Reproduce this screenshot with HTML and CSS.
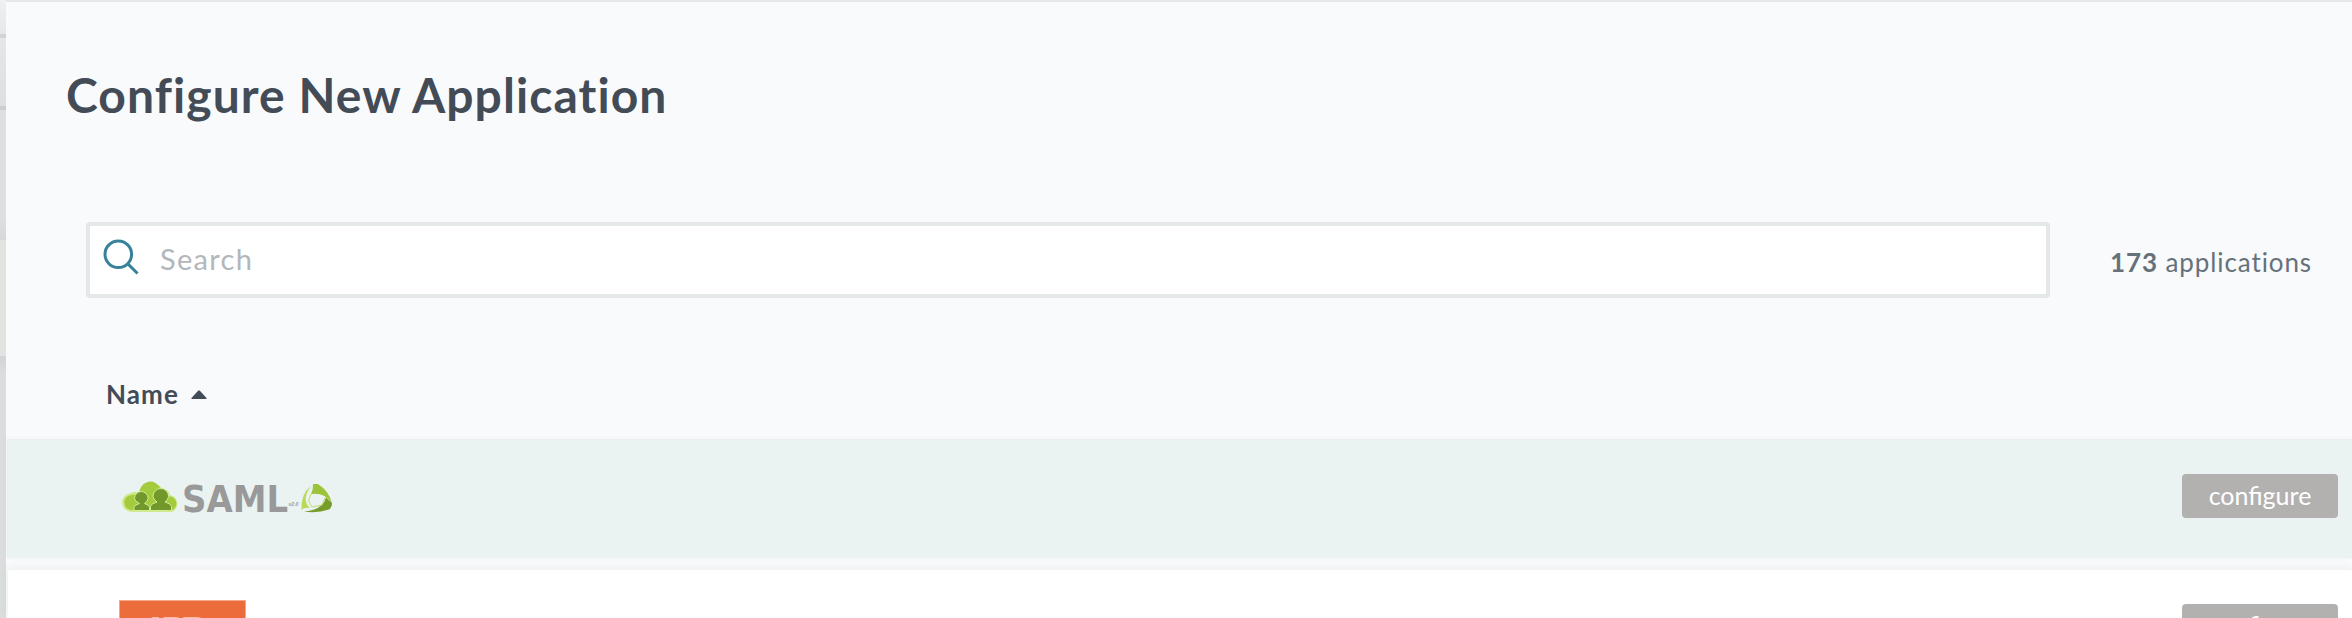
FILE: index.html
```html
<!DOCTYPE html>
<html lang="en">
<head>
<meta charset="utf-8">
<title>Configure New Application</title>
<link rel="stylesheet" href="styles.css">
</head>
<body>
<div class="page">
  <div class="backdrop">
    <div class="strip strip-head"></div>
    <div class="strip strip-row"></div>
    <div class="strip strip-gap"></div>
    <div class="strip strip-card"></div>
    <div class="strip strip-rest"></div>
  </div>
  <main class="panel">
    <h1 class="title">Configure New Application</h1>
    <div class="toolbar">
      <div class="search">
        <svg class="search-icon" width="37" height="37" viewBox="0 0 37 37"><circle cx="15.3" cy="15.3" r="13.3"/><path d="M24.6 24.6L34.6 34.5"/></svg>
        <span class="placeholder">Search</span>
      </div>
      <div class="count"><b>173</b> applications</div>
    </div>
    <div class="sort"><span>Name</span><svg width="16" height="9" viewBox="0 0 16 9"><path d="M0.5 9V8L7.3 0.6H8.7L15.5 8V9Z" fill="#434c56"/></svg></div>
    <div class="row row-active">
      <svg class="saml" width="212" height="36" viewBox="0 -2 212 36">
        <path fill="#cfea8b" d="M10 30A9.5 9.5 0 0 1 9 11Q12 9 17 10A13 13 0 0 1 40 6.5Q47 7 48 13A9 9 0 0 1 50 30Z"/>
        <path fill="#a4cb3c" d="M10 28A7.5 7.5 0 0 1 9.500 13Q13 12 18 13A10.500 10.500 0 0 1 38.500 7.500Q45 9 47 14.500A7 7 0 0 1 50 28Z"/>
        <g fill="#72982c" stroke="#d3ec98"><path d="M12 28.500V25.500Q12 23 17.500 21.500Q12.500 19 12.500 16.500A6.800 7 0 0 1 26.100 16.500Q26 19 22.500 21.500Q27.500 23 27.500 25.500V28.500Z"/><path d="M28.500 28.500V24.500Q29 21.500 35 20Q31 17 31 14.500A7.800 8 0 0 1 46.600 14.500Q46.500 17 43 20Q49 21.500 49.500 24.500V28.500Z"/></g>
        <text class="saml-text" x="60" y="29.500" textLength="106" lengthAdjust="spacingAndGlyphs">SAML</text>
        <text class="saml-version" x="166.500" y="23.500">v2.0</text>
        <path fill="#bcd95c" d="M179.500 28Q178.500 12 189 4Q179 18 188 26Q183 25 179.500 28Z"/>
        <path fill="#9cc43a" d="M191 2L196 2Q207 9 210 21Q202 10 189 12Q191.500 7 191 2Z"/>
        <path fill="#769c2c" d="M204 15.500L210 21Q210 25 207 27.500Q195 31.500 182 29.500Q201 28 204 15.500Z"/>
        <path fill="none" stroke="#c3dd6a" stroke-width="1" d="M189 12L186.500 19L190 25L200 23L203 15.500"/>
      </svg>
      <span class="button">configure</span>
    </div>
    <div class="row row-next">
      <div class="brand">ADP</div>
      <span class="button">configure</span>
    </div>
  </main>
</div>
</body>
</html>
```
FILE: styles.css
```css
* { box-sizing: border-box; }
body { margin: 0; overflow: hidden; font-family: Lato, "Open Sans", sans-serif; color: #434c56; }
.page { display: flex; width: 2352px; height: 618px; overflow: hidden; background: #e5e7e8; }
.backdrop { width: 6px; flex: none; }
.strip-head { height: 38px; background: linear-gradient(#eef0f2, #e5e7e9 34px, #cfd4d5 34px); }
.strip-row { height: 72px; background: linear-gradient(#e6e6e6, #dfdfdf 68px, #cbcecf 68px); }
.strip-gap { height: 130px; background: linear-gradient(#dee0df 110px, #d5d7d8); }
.strip-card { height: 116px; background: #e2e2e1; }
.strip-rest { height: 262px; background: linear-gradient(#d2d3d4, #dadddc 16px); }
.panel { flex: 1; height: 616px; margin-top: 2px; background: #f9fafc; }
.title { margin: 0; padding: 69px 0 0 60px; font-size: 48px; line-height: 48px; font-weight: 700; letter-spacing: 1.07px; }
.toolbar { display: flex; margin: 103px 0 0 80px; height: 76px; align-items: center; }
.search { width: 1964px; height: 76px; display: flex; align-items: flex-start; background: #fff; border: 4px solid #e4e8e9; border-radius: 4px; padding: 13px 0 0 13px; }
.search-icon { flex: none; fill: none; stroke: #37829a; stroke-width: 3; }
.placeholder { padding: 2px 0 0 20px; font-size: 29px; line-height: 36px; letter-spacing: 1.3px; color: #b2b7bb; }
.count { margin-left: 60px; padding-top: 4px; font-size: 26px; line-height: 36px; letter-spacing: .9px; white-space: nowrap; color: #66717a; }
.sort { display: flex; height: 32px; margin: 80px 0 0 100px; align-items: center; gap: 12px; font-size: 26px; line-height: 32px; font-weight: 700; letter-spacing: 1.1px; }
.row { display: flex; justify-content: space-between; align-items: flex-start; padding-right: 14px; }
.row-active { height: 119px; margin: 29px 0 0 1px; padding-top: 34px; background: #eaf3f1; border: 1px solid #eceff1; border-right: 0; box-shadow: 0 0 4px rgba(60,70,90,.04); }
.row-next { height: 48px; margin: 12px 0 0 2px; padding-top: 30px; background: #fff; box-shadow: 0 -2px 8px rgba(60,70,90,.07); }
.saml { margin: 6px 0 0 114px; }
.saml-text { font: 700 37px "DejaVu Sans", sans-serif; fill: #999; }
.saml-version { font: italic 700 5px "Liberation Sans", Arial, sans-serif; fill: #999; }
.button { width: 156px; height: 44px; border-radius: 4px; background: #b2b1b0; color: #fff; text-align: center; font-size: 25px; line-height: 43px; }
.row-next .button { margin-top: 4px; }
.brand { width: 127px; height: 18px; margin-left: 111px; overflow: hidden; background: #ec6c3b; border: 1px solid #f5a88b; border-bottom: 0; padding-left: 21px; color: #f6bda6; font: 700 40px/61px "Liberation Sans", Arial, sans-serif; letter-spacing: -9px; }
```
